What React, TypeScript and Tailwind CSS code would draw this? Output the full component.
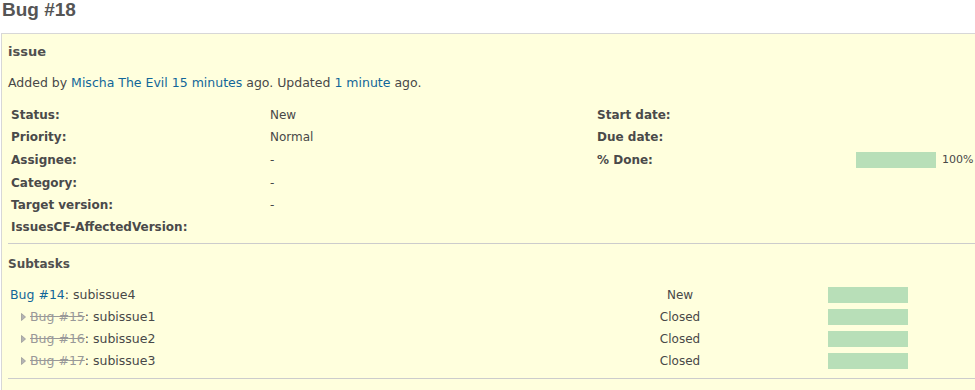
import React from 'react';

const font = { fontFamily: '"DejaVu Sans", Verdana, sans-serif' };

interface Attr {
  label: string;
  value?: string;
  h: string;
}

const leftAttrs: Attr[] = [
  { label: 'Status:', value: 'New', h: 'h-[22px]' },
  { label: 'Priority:', value: 'Normal', h: 'h-[22px]' },
  { label: 'Assignee:', value: '-', h: 'h-[24px]' },
  { label: 'Category:', value: '-', h: 'h-[22px]' },
  { label: 'Target version:', value: '-', h: 'h-[22px]' },
  { label: 'IssuesCF-AffectedVersion:', value: '', h: 'h-[22px]' },
];

const subtasks = [
  { id: 14, title: 'subissue4', status: 'New', closed: false },
  { id: 15, title: 'subissue1', status: 'Closed', closed: true },
  { id: 16, title: 'subissue2', status: 'Closed', closed: true },
  { id: 17, title: 'subissue3', status: 'Closed', closed: true },
];

function Arrow() {
  return (
    <svg width="5" height="8" viewBox="0 0 5 8" className="ml-[1px] mr-[4px]">
      <path d="M0.5 0.5 L4.5 4 L0.5 7.5 Z" fill="#b4b4b4" stroke="#9a9a9a" strokeWidth="0.8" />
    </svg>
  );
}

function Bar({ className = '' }: { className?: string }) {
  return <div className={`w-[80px] h-[16px] bg-[#b8dfb8] ${className}`} />;
}

export default function App() {
  return (
    <div className="w-[975px] h-[390px] overflow-hidden bg-white text-[#484848] text-[12px]" style={font}>
      {/* title */}
      <h2
        className="h-[33px] pl-[2px] text-[19px] font-bold leading-[20px] text-[#555]"
        style={{ fontFamily: '"Liberation Sans", Arial, sans-serif' }}
      >
        Bug #18
      </h2>

      {/* issue box */}
      <div className="ml-[1px] border-t border-l border-[#d7d7d7] bg-[#ffffdd] pl-[6px] h-[357px]">
        <h3 className="h-[36px] leading-[36px] text-[13px] font-bold text-[#505050]">issue</h3>
        <p className="h-[26px] leading-[26px] text-[12.5px]">
          Added by <span className="text-[#116699]">Mischa The Evil</span>{' '}
          <span className="text-[#116699]">15 minutes</span> ago. Updated{' '}
          <span className="text-[#116699]">1 minute</span> ago.
        </p>

        {/* attributes */}
        <div className="mt-[8px] flex pl-[3px]">
          <div className="w-[586px]">
            {leftAttrs.map((a) => (
              <div key={a.label} className={`flex items-center ${a.h}`}>
                <div className="w-[259px] font-bold text-[#4a4a4a]">{a.label}</div>
                <div>{a.value}</div>
              </div>
            ))}
          </div>
          <div>
            <div className="flex items-center h-[22px]">
              <div className="w-[259px] font-bold text-[#4a4a4a]">Start date:</div>
            </div>
            <div className="flex items-center h-[22px]">
              <div className="w-[259px] font-bold text-[#4a4a4a]">Due date:</div>
            </div>
            <div className="flex items-center h-[24px]">
              <div className="w-[259px] font-bold text-[#4a4a4a]">% Done:</div>
              <Bar />
              <span className="ml-[6px] text-[11px]">100%</span>
            </div>
          </div>
        </div>

        <div className="mt-[5px] border-t border-[#cccccc]" />

        {/* subtasks */}
        <h3 className="h-[40px] leading-[40px] font-bold text-[#505050]">Subtasks</h3>
        <div>
          {subtasks.map((s) => (
            <div key={s.id} className="flex items-center h-[22px]">
              <div className="w-[600px] flex items-center text-[12.5px]">
                {s.closed ? (
                  <>
                    <span className="w-[12px]" />
                    <Arrow />
                    <span className="text-[#999] line-through">Bug #{s.id}</span>
                  </>
                ) : (
                  <span className="ml-[2px] text-[#116699]">Bug #{s.id}</span>
                )}
                <span>: {s.title}</span>
              </div>
              <div className="w-[144px] text-center">{s.status}</div>
              <div className="w-[76px]" />
              <Bar />
            </div>
          ))}
        </div>

        <div className="mt-[6px] border-t border-[#cccccc]" />
      </div>
    </div>
  );
}
